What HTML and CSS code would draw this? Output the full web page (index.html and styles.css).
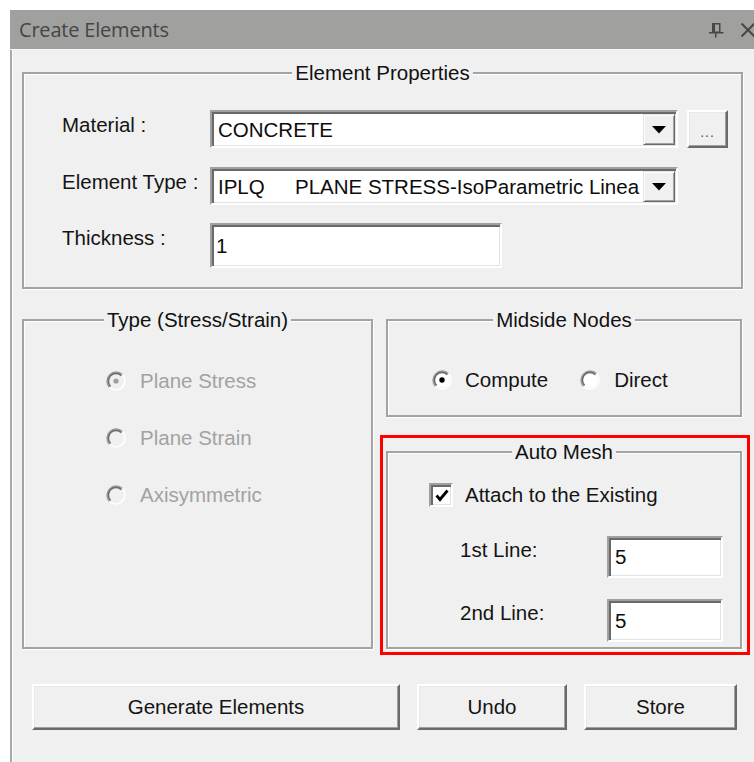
FILE: index.html
```html
<!DOCTYPE html>
<html lang="en">
<head>
<meta charset="utf-8">
<title>Create Elements</title>
<link rel="stylesheet" href="styles.css">
</head>
<body>
<div class="window">
  <div class="titlebar">
    <span class="title">Create Elements</span>
    <span class="tb-icons">
      <svg class="tb-pin" width="16" height="16" viewBox="0 0 16 16" aria-hidden="true">
        <rect x="4.75" y="1.75" width="7" height="8.5" fill="none" stroke="#474747" stroke-width="1.5"/>
        <rect x="4" y="1" width="3" height="9.5" fill="#474747"/>
        <path d="M1 10.75h14.5M7.75 10.75V15.5" stroke="#474747" stroke-width="1.6" fill="none"/>
      </svg>
      <svg class="tb-close" width="16" height="16" viewBox="0 0 16 16" aria-hidden="true">
        <path d="M1.5 1.5l13 13M14.5 1.5l-13 13" stroke="#474747" stroke-width="2" fill="none"/>
      </svg>
    </span>
  </div>

  <div class="panel">
    <fieldset class="group group-props">
      <legend>Element Properties</legend>

      <div class="prop-row row-material">
        <span class="label">Material :</span>
        <div class="combo">
          <span class="combo-text">CONCRETE</span>
          <span class="drop-btn"><svg width="14" height="8" viewBox="0 0 14 8"><path d="M0 0h14L7 7.5z" fill="#000"/></svg></span>
        </div>
        <span class="btn btn-more">...</span>
      </div>

      <div class="prop-row row-type">
        <span class="label">Element Type :</span>
        <div class="combo">
          <span class="combo-text"><span class="code">IPLQ</span>PLANE STRESS-IsoParametric Linea</span>
          <span class="drop-btn"><svg width="14" height="8" viewBox="0 0 14 8"><path d="M0 0h14L7 7.5z" fill="#000"/></svg></span>
        </div>
      </div>

      <div class="prop-row row-thick">
        <span class="label">Thickness :</span>
        <div class="textbox textbox-thick">1</div>
      </div>
    </fieldset>

    <div class="middle">
      <fieldset class="group group-type">
        <legend>Type (Stress/Strain)</legend>
        <div class="radio-row disabled">
          <svg class="radio" width="20" height="20" viewBox="0 0 20 20">
            <circle cx="10" cy="10" r="7.5" fill="#f0f0f0"/>
            <path d="M3.5 16.5A9.2 9.2 0 0 1 16.5 3.5" stroke="#a0a0a0" stroke-width="1.6" fill="none"/>
            <path d="M4.6 15.4A7.6 7.6 0 0 1 15.4 4.6" stroke="#6f6f6f" stroke-width="1.6" fill="none"/>
            <path d="M16.5 3.5A9.2 9.2 0 0 1 3.5 16.5" stroke="#ffffff" stroke-width="1.6" fill="none"/>
            <circle cx="10" cy="10" r="2.6" fill="#a0a0a0"/>
          </svg>
          <span>Plane Stress</span>
        </div>
        <div class="radio-row disabled">
          <svg class="radio" width="20" height="20" viewBox="0 0 20 20">
            <circle cx="10" cy="10" r="7.5" fill="#f0f0f0"/>
            <path d="M3.5 16.5A9.2 9.2 0 0 1 16.5 3.5" stroke="#a0a0a0" stroke-width="1.6" fill="none"/>
            <path d="M4.6 15.4A7.6 7.6 0 0 1 15.4 4.6" stroke="#6f6f6f" stroke-width="1.6" fill="none"/>
            <path d="M16.5 3.5A9.2 9.2 0 0 1 3.5 16.5" stroke="#ffffff" stroke-width="1.6" fill="none"/>
          </svg>
          <span>Plane Strain</span>
        </div>
        <div class="radio-row disabled">
          <svg class="radio" width="20" height="20" viewBox="0 0 20 20">
            <circle cx="10" cy="10" r="7.5" fill="#f0f0f0"/>
            <path d="M3.5 16.5A9.2 9.2 0 0 1 16.5 3.5" stroke="#a0a0a0" stroke-width="1.6" fill="none"/>
            <path d="M4.6 15.4A7.6 7.6 0 0 1 15.4 4.6" stroke="#6f6f6f" stroke-width="1.6" fill="none"/>
            <path d="M16.5 3.5A9.2 9.2 0 0 1 3.5 16.5" stroke="#ffffff" stroke-width="1.6" fill="none"/>
          </svg>
          <span>Axisymmetric</span>
        </div>
      </fieldset>

      <div class="right-col">
        <fieldset class="group group-midside">
          <legend>Midside Nodes</legend>
          <div class="radio-line">
            <span class="radio-item">
              <svg class="radio" width="20" height="20" viewBox="0 0 20 20">
                <circle cx="10" cy="10" r="7.5" fill="#ffffff"/>
                <path d="M3.5 16.5A9.2 9.2 0 0 1 16.5 3.5" stroke="#a0a0a0" stroke-width="1.6" fill="none"/>
                <path d="M4.6 15.4A7.6 7.6 0 0 1 15.4 4.6" stroke="#6a6a6a" stroke-width="1.6" fill="none"/>
                <path d="M16.5 3.5A9.2 9.2 0 0 1 3.5 16.5" stroke="#ffffff" stroke-width="1.6" fill="none"/>
                <circle cx="10" cy="10" r="2.7" fill="#000"/>
              </svg>
              <span>Compute</span>
            </span>
            <span class="radio-item item-direct">
              <svg class="radio" width="20" height="20" viewBox="0 0 20 20">
                <circle cx="10" cy="10" r="7.5" fill="#ffffff"/>
                <path d="M3.5 16.5A9.2 9.2 0 0 1 16.5 3.5" stroke="#a0a0a0" stroke-width="1.6" fill="none"/>
                <path d="M4.6 15.4A7.6 7.6 0 0 1 15.4 4.6" stroke="#6a6a6a" stroke-width="1.6" fill="none"/>
                <path d="M16.5 3.5A9.2 9.2 0 0 1 3.5 16.5" stroke="#ffffff" stroke-width="1.6" fill="none"/>
              </svg>
              <span>Direct</span>
            </span>
          </div>
        </fieldset>

        <div class="highlight">
          <fieldset class="group group-mesh">
            <legend>Auto Mesh</legend>
            <div class="check-row">
              <span class="checkbox">
                <svg width="18" height="18" viewBox="0 0 18 18"><path d="M3.5 8.5l3.5 4 7.5-9" stroke="#000" stroke-width="2.8" fill="none"/></svg>
              </span>
              <span>Attach to the Existing</span>
            </div>
            <div class="mesh-row mesh-first">
              <span class="mesh-label">1st Line:</span>
              <div class="textbox textbox-mesh">5</div>
            </div>
            <div class="mesh-row mesh-second">
              <span class="mesh-label">2nd Line:</span>
              <div class="textbox textbox-mesh">5</div>
            </div>
          </fieldset>
        </div>
      </div>
    </div>

    <div class="actions">
      <span class="btn btn-generate">Generate Elements</span>
      <span class="btn btn-undo">Undo</span>
      <span class="btn btn-store">Store</span>
    </div>
  </div>
</div>
</body>
</html>
```

FILE: styles.css
```css
html, body {
  margin: 0;
  padding: 0;
  background: #ffffff;
  overflow: hidden;
}

body {
  font-family: "Liberation Sans", Arial, sans-serif;
  font-size: 20.5px;
  color: #141414;
}

.window {
  margin: 10px 0 0 10px;
  height: calc(100vh - 10px);
  display: flex;
  flex-direction: column;
}

/* dock title bar */
.titlebar {
  height: 39px;
  flex: none;
  display: flex;
  align-items: center;
  justify-content: space-between;
  padding-left: 9px;
  background: #a0a19f;
  border-bottom: 1px solid #f7f7f7;
}

.title {
  font-family: "Open Sans", "Noto Sans", sans-serif;
  font-size: 20px;
  color: #454545;
  letter-spacing: -0.2px;
}

.tb-icons {
  display: flex;
  align-items: center;
  gap: 16px;
  margin-right: -2px;
  padding-top: 1px;
}

.tb-icons svg {
  display: block;
}

/* dialog body */
.panel {
  flex: 1;
  background: #f0f0f0;
  border-left: 2px solid #a9a9a9;
  box-shadow: inset 1px 0 0 #fbfbfb;
  padding: 11px 0 0 10px;
}

/* etched group boxes; horizontal insets live on the children so the
   caption stays centred on the frame */
.group {
  margin: 0;
  box-sizing: border-box;
  border: 2px solid #a3a3a3;
  box-shadow: inset 1px 1px 0 #ffffff, 1px 1px 0 #ffffff;
  min-width: 0;
  padding-left: 0;
  padding-right: 0;
}

.group legend {
  margin: 0 auto;
  padding: 0 3px;
  line-height: 24px;
  background: #f0f0f0;
  color: #111;
}

.group-props {
  width: 721px;
  padding-top: 25px;
  padding-bottom: 19px;
}

.prop-row {
  display: flex;
  align-items: stretch;
  margin-left: 38px;
}

.row-material { height: 38px; }
.row-type { height: 38px; margin-top: 19px; }
.row-thick { height: 45px; margin-top: 18px; }

.label {
  width: 148px;
  flex: none;
  line-height: 24px;
  padding-top: 3px;
  white-space: nowrap;
}

/* sunken edit / combo frames */
.combo,
.textbox,
.checkbox {
  box-sizing: border-box;
  background: #ffffff;
  border: 2px solid;
  border-color: #a0a0a0 #ffffff #ffffff #a0a0a0;
  box-shadow: inset 2px 2px 0 #6a6a6a, inset -1px -1px 0 #e3e3e3;
}

.combo {
  width: 468px;
  display: flex;
  padding: 2px 1px 1px 2px;
}

.combo-text {
  flex: 1;
  min-width: 0;
  align-self: center;
  padding-left: 4px;
  white-space: nowrap;
  overflow: hidden;
  color: #0c0c0c;
}

.combo-text .code {
  display: inline-block;
  width: 77px;
}

.drop-btn {
  width: 32px;
  flex: none;
  display: flex;
  align-items: center;
  justify-content: center;
  box-sizing: border-box;
  background: #f0f0f0;
  border: 1px solid;
  border-color: #e3e3e3 #696969 #696969 #e3e3e3;
  box-shadow: inset 1px 1px 0 #ffffff, inset -1px -1px 0 #a0a0a0;
}

.drop-btn svg {
  display: block;
}

.textbox {
  display: flex;
  align-items: center;
  padding-left: 4px;
  color: #0c0c0c;
}

.textbox-thick {
  width: 292px;
}

/* raised push buttons */
.btn {
  box-sizing: border-box;
  display: flex;
  align-items: center;
  justify-content: center;
  background: #f0f0f0;
  border: 2px solid;
  border-color: #ffffff #6a6a6a #6a6a6a #ffffff;
  box-shadow: inset -1px -1px 0 #a0a0a0, inset 1px 1px 0 #e8e8e8;
  white-space: nowrap;
  color: #141414;
}

.btn-more {
  width: 41px;
  margin-left: 9px;
  font-size: 14px;
  letter-spacing: 1px;
  color: #505050;
  padding-top: 6px;
}

/* middle band: type group left, midside + mesh right */
.middle {
  display: flex;
  align-items: stretch;
  gap: 7px;
  margin-top: 19px;
}

.group-type {
  width: 351px;
  flex: none;
  margin-bottom: 6px;
  padding-top: 34px;
}

.radio-row {
  display: flex;
  align-items: center;
  gap: 14px;
  height: 30px;
  margin-left: 82px;
}

.radio-row + .radio-row {
  margin-top: 27px;
}

.radio-row.disabled {
  color: #a2a2a2;
}

.radio {
  display: block;
  flex: none;
}

.right-col {
  width: 370px;
  flex: none;
  display: flex;
  flex-direction: column;
}

.group-midside {
  margin: 0 8px 0 6px;
  padding-top: 33px;
  padding-bottom: 20px;
}

.radio-line {
  display: flex;
  align-items: center;
  height: 30px;
  margin-left: 44px;
}

.radio-item {
  display: flex;
  align-items: center;
  gap: 13px;
}

.item-direct {
  margin-left: 32px;
  gap: 14px;
}

/* red highlight frame around the auto mesh group */
.highlight {
  margin-top: 18px;
  border: 3px solid #ff0000;
  padding: 2px 5px 3px 3px;
}

.group-mesh {
  padding-top: 19px;
  padding-bottom: 5px;
}

.check-row {
  display: flex;
  align-items: center;
  gap: 12px;
  height: 24px;
  margin-left: 41px;
}

.checkbox {
  width: 24px;
  height: 24px;
  display: flex;
  align-items: center;
  justify-content: center;
  padding: 1px 0 0 1px;
}

.checkbox svg {
  display: block;
}

.mesh-row {
  display: flex;
  margin-left: 72px;
}

.mesh-first {
  height: 42px;
  margin-top: 29px;
}

.mesh-second {
  height: 43px;
  margin-top: 21px;
}

.mesh-label {
  width: 147px;
  flex: none;
  line-height: 24px;
  padding-top: 2px;
}

.textbox-mesh {
  width: 116px;
  padding-left: 6px;
}

/* bottom command buttons */
.actions {
  display: flex;
  gap: 17px;
  margin-top: 29px;
  padding-left: 10px;
}

.actions .btn {
  height: 46px;
}

.btn-generate { width: 368px; }
.btn-undo { width: 150px; }
.btn-store { width: 153px; }
```
